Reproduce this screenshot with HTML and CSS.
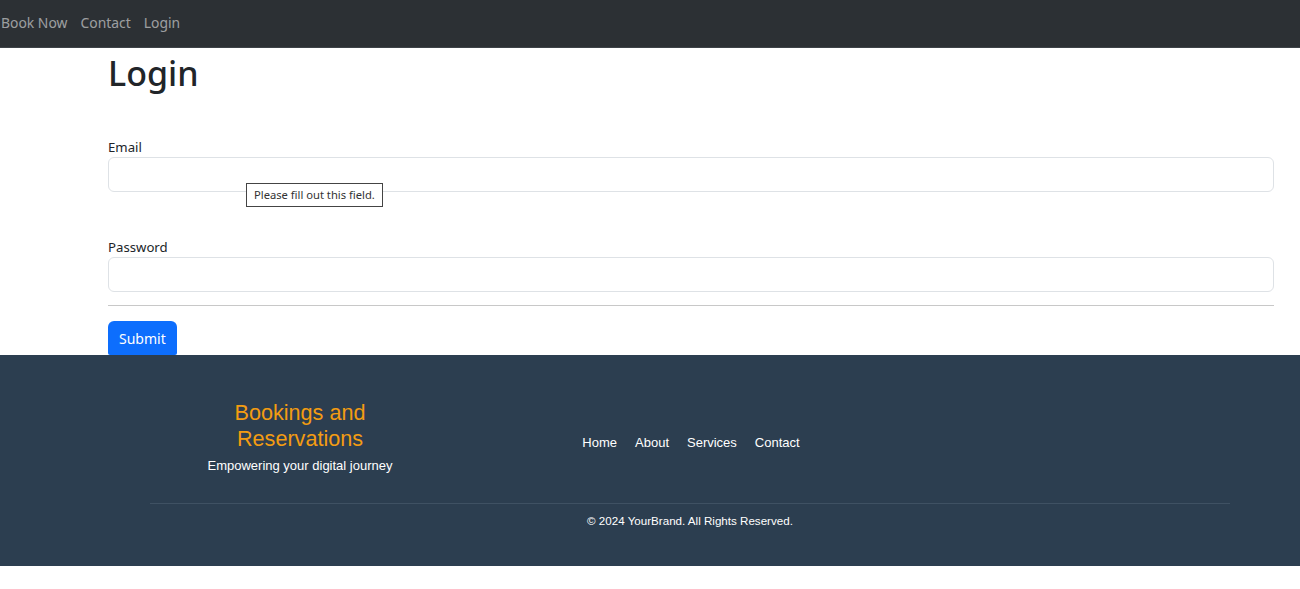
FILE: index.html
```html
<!DOCTYPE html>
<html lang="en">
<head>
<meta charset="utf-8">
<title>Login</title>
<link rel="stylesheet" href="styles.css">
</head>
<body>
<nav class="navbar">
  <a class="nav-link" href="#">Book Now</a>
  <a class="nav-link" href="#">Contact</a>
  <a class="nav-link" href="#">Login</a>
</nav>
<main class="page">
  <h1 class="title">Login</h1>
  <form class="login-form">
    <div class="field">
      <label class="label" for="email">Email</label>
      <div class="input-wrap">
        <input class="input" id="email" type="email">
        <div class="bubble">Please fill out this field.</div>
      </div>
    </div>
    <div class="field">
      <label class="label" for="password">Password</label>
      <input class="input" id="password" type="password">
    </div>
    <hr class="rule">
    <button class="btn" type="button">Submit</button>
  </form>
</main>
<footer class="footer">
  <div class="footer-inner">
    <div class="footer-top">
      <div class="brand">
        <div class="brand-name">Bookings and<br>Reservations</div>
        <div class="tagline">Empowering your digital journey</div>
      </div>
      <ul class="footer-links">
        <li><a href="#">Home</a></li>
        <li><a href="#">About</a></li>
        <li><a href="#">Services</a></li>
        <li><a href="#">Contact</a></li>
      </ul>
      <div class="spacer"></div>
    </div>
    <div class="copyright">© 2024 YourBrand. All Rights Reserved.</div>
  </div>
</footer>
</body>
</html>
```
FILE: styles.css
```css
* { box-sizing: border-box; }
html, body { margin: 0; padding: 0; }
body {
  font-family: "Noto Sans", "Open Sans", sans-serif;
  font-size: 14px;
  color: #212529;
  background: #fff;
}
.navbar {
  height: 48px;
  background: #2c3034;
  border-bottom: 1px solid #3e4348;
  display: flex;
  align-items: center;
  gap: 13px;
  padding-left: 1px;
  padding-bottom: 2px;
}
.nav-link {
  color: rgba(255,255,255,0.55);
  text-decoration: none;
  font-size: 13.9px;
}
.page {
  padding: 0 26px 0 108px;
}
.title {
  margin: 0;
  padding-top: 1px;
  font-size: 34px;
  font-weight: 500;
  line-height: 48px;
  color: #212529;
}
.login-form {
  padding-top: 40px;
}
.field { margin-bottom: 45px; }
.field + .field { margin-bottom: 13px; }
.label {
  display: block;
  font-size: 13.2px;
  line-height: 20px;
  margin-bottom: 0;
}
.input-wrap { position: relative; }
.input {
  display: block;
  width: 100%;
  height: 35px;
  border: 1px solid #dee2e6;
  border-radius: 6px;
  font: inherit;
  padding: 0 12px;
  background: #fff;
}
.bubble {
  position: absolute;
  left: 138px;
  top: 26px;
  background: #fff;
  border: 1px solid #444;
  padding: 3px 7px 4px;
  font-size: 11.2px;
  line-height: 15px;
  color: #333;
  white-space: nowrap;
}
.rule {
  margin: 0 0 15px;
  border: 0;
  border-top: 1px solid #c8c8c8;
}
.btn {
  display: block;
  height: 34px;
  padding: 0 11px;
  background: #0d6efd;
  color: #fff;
  border: 0;
  border-radius: 6px 6px 2px 2px;
  font: inherit;
  font-size: 14px;
}
.footer {
  background: #2c3e50;
  height: 211px;
  font-family: "Liberation Sans", Arial, sans-serif;
  color: #fff;
}
.footer-inner {
  margin: 0 70px 0 150px;
  padding-top: 45px;
}
.footer-top {
  display: grid;
  grid-template-columns: 300px 1fr 300px;
  align-items: center;
  padding-bottom: 29px;
  border-bottom: 1px solid #3f5163;
}
.brand { text-align: center; }
.brand-name {
  color: #f39c12;
  font-size: 21.6px;
  line-height: 26px;
}
.tagline {
  margin-top: 6px;
  font-size: 13px;
  line-height: 16px;
}
.footer-links {
  list-style: none;
  margin: 9px 0 0;
  padding: 0 0 0 2px;
  display: flex;
  justify-content: center;
  gap: 18px;
}
.footer-links a {
  color: #fff;
  text-decoration: none;
  font-size: 13px;
}
.copyright {
  text-align: center;
  font-size: 11.6px;
  padding-top: 10px;
}
```
